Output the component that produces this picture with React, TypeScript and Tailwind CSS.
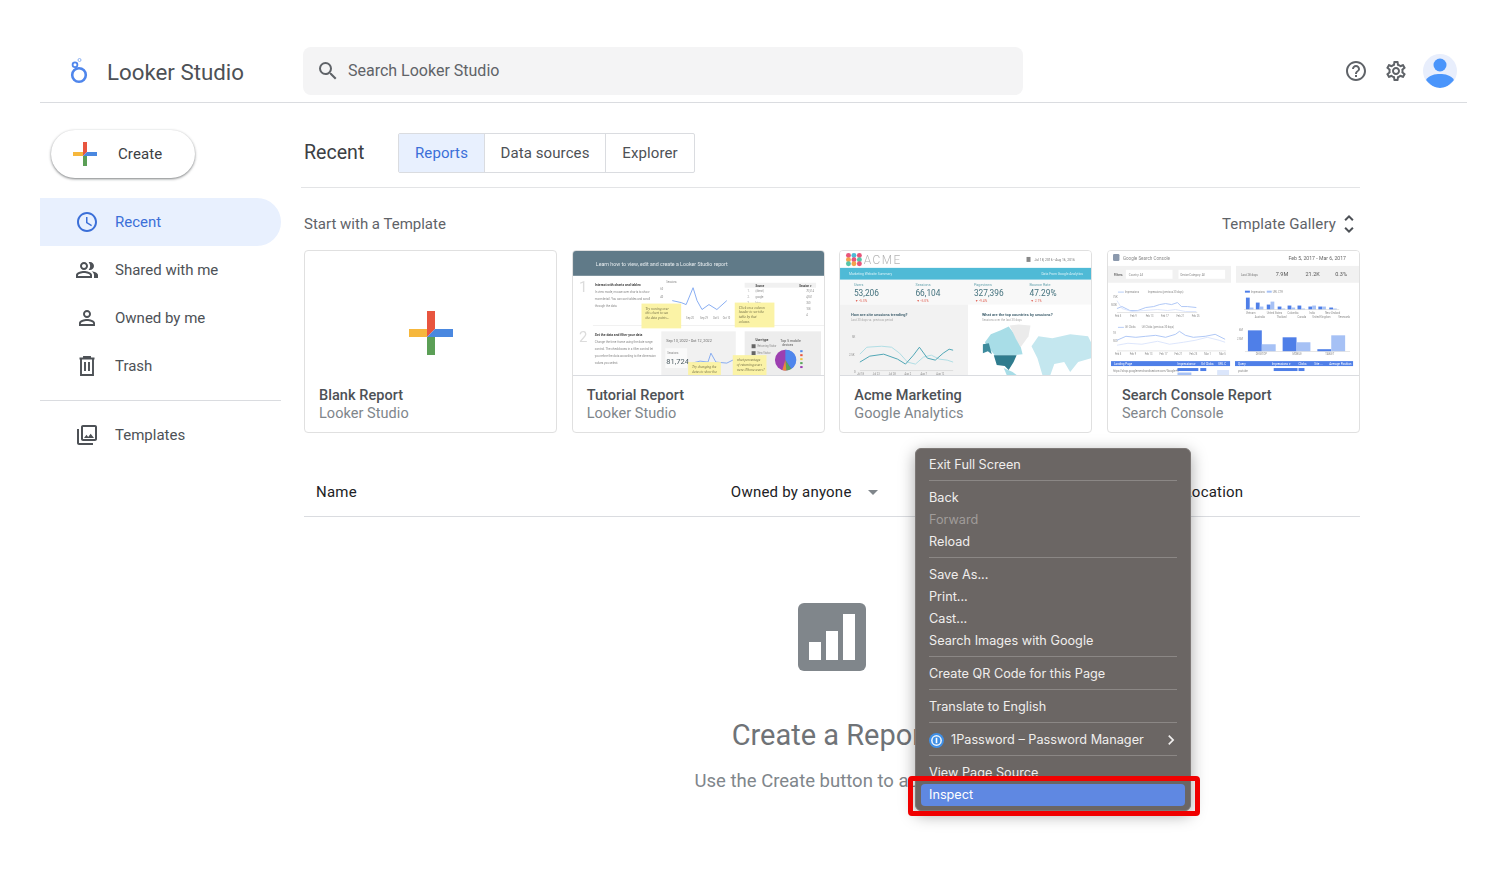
import {
  MdAccessTime,
  MdArrowDropDown,
  MdChevronRight,
  MdHelpOutline,
  MdOutlinePeopleAlt,
  MdOutlinePhotoLibrary,
  MdOutlineSettings,
  MdPersonOutline,
  MdSearch,
  MdUnfoldMore,
} from "react-icons/md";

function TrashIcon({ className }: { className?: string }) {
  return (
    <svg viewBox="0 0 24 24" width="24" height="24" className={className} fill="none" stroke="currentColor" strokeWidth="1.9">
      <path d="M4.5 4.5h15M9 4.5V3h6v1.5M6 4.5V21h12V4.5M10 8v9M14 8v9" />
    </svg>
  );
}

const navItems = [
  { label: "Recent", icon: MdAccessTime, active: true },
  { label: "Shared with me", icon: MdOutlinePeopleAlt },
  { label: "Owned by me", icon: MdPersonOutline },
  { label: "Trash", icon: TrashIcon },
];

const menuGroups = [
  [{ label: "Exit Full Screen" }],
  [{ label: "Back" }, { label: "Forward", disabled: true }, { label: "Reload" }],
  [{ label: "Save As..." }, { label: "Print..." }, { label: "Cast..." }, { label: "Search Images with Google" }],
  [{ label: "Create QR Code for this Page" }],
  [{ label: "Translate to English" }],
];

function Plus({ size, bar }: { size: number; bar: number }) {
  const a = (size - bar) / 2;
  const b = a + bar;
  return (
    <svg width={size} height={size} viewBox={`0 0 ${size} ${size}`}>
      <rect x={0} y={a} width={a} height={bar} fill="#f6b73c" />
      <rect x={a} y={b} width={bar} height={a} fill="#5b9f56" />
      <polygon points={`${a},0 ${b},0 ${b},${a} ${a},${b}`} fill="#e8553f" />
      <polygon points={`${b},${a} ${size},${a} ${size},${b} ${a},${b}`} fill="#4a88e0" />
    </svg>
  );
}

function LookerLogo() {
  return (
    <svg width="20" height="28" viewBox="0 0 20 28">
      <circle cx="10" cy="18" r="6.8" fill="none" stroke="#4f86ec" strokeWidth="2.6" />
      <circle cx="6" cy="7.8" r="2.4" fill="none" stroke="#4f86ec" strokeWidth="1.8" />
      <circle cx="10.5" cy="3" r="1.5" fill="none" stroke="#8ab0f3" strokeWidth="1" />
      <path d="M6.5 10.5 L8 12" stroke="#4f86ec" strokeWidth="1.6" />
    </svg>
  );
}

function Avatar() {
  return (
    <svg width="34" height="34" viewBox="0 0 34 34">
      <defs>
        <clipPath id="avatar-clip">
          <circle cx="17" cy="17" r="17" />
        </clipPath>
      </defs>
      <circle cx="17" cy="17" r="17" fill="#e8eefc" />
      <circle cx="17" cy="11" r="6.5" fill="#4a95fb" />
      <path d="M3 26 C6 21 12 20 17 20 C22 20 28 21 31 26 C27 31 22 34 17 34 C12 34 7 31 3 26Z" fill="#4a95fb" clipPath="url(#avatar-clip)" />
    </svg>
  );
}

function OnePasswordIcon() {
  return (
    <svg width="15" height="15" viewBox="0 0 15 15" className="mr-[7px]">
      <circle cx="7.5" cy="7.5" r="7.5" fill="#3f8fe6" />
      <circle cx="7.5" cy="7.5" r="5.4" fill="#eef5fc" />
      <circle cx="7.5" cy="7.5" r="3.9" fill="#3f8fe6" />
      <rect x="6.7" y="4.8" width="1.6" height="5.4" fill="#fff" />
    </svg>
  );
}

// tiny grey copy used inside the thumbnails
function T({ x, y, s, c = "#8a8a8a", w, children }: { x: number; y: number; s: number; c?: string; w?: number; children: string }) {
  return (
    <text x={x} y={y} fontSize={s} fill={c} fontWeight={w} fontFamily="Roboto, sans-serif">
      {children}
    </text>
  );
}

function Note({ x, y, w, h, lines }: { x: number; y: number; w: number; h: number; lines: string[] }) {
  return (
    <g>
      <rect x={x} y={y} width={w} height={h} fill="#fbf3a6" />
      {lines.map((l, i) => (
        <text key={l} x={x + 4} y={y + 6 + i * 5} fontSize="3.6" fill="#77734a" fontStyle="italic" fontFamily="'Liberation Serif', serif">
          {l}
        </text>
      ))}
    </g>
  );
}

function TutorialThumb() {
  return (
    <svg viewBox="0 0 253 125" className="h-full w-full blur-[0.3px]">
      <rect width="253" height="125" fill="#fff" />
      <rect width="253" height="25" fill="#607a88" />
      <T x={23} y={15} s={5.3} c="#e6ecef">Learn how to view, edit and create a Looker Studio report</T>
      <T x={6} y={41} s={15} c="#dcdcdc">1</T>
      <T x={6} y={92} s={15} c="#dcdcdc">2</T>
      <T x={22} y={35} s={3.4} c="#444" w={700}>Interact with charts and tables</T>
      <T x={22} y={42} s={3}>In view mode, mouse over charts to show</T>
      <T x={22} y={49} s={3}>more detail. You can sort tables and scroll</T>
      <T x={22} y={56} s={3}>through the data.</T>
      <rect x="20" y="75" width="233" height="0.6" fill="#e8e8e8" />
      <T x={94} y={32} s={2.6}>Sessions</T>
      <T x={88} y={39} s={2.6}>60</T>
      <T x={88} y={47} s={2.6}>40</T>
      <polyline
        points="100,50 109,52 114,54 121,37 125,50 130,59 137,54 145,59 155,50"
        fill="none"
        stroke="#7ba4f0"
        strokeWidth="0.9"
      />
      <T x={114} y={69} s={2.6}>Sep 20</T>
      <T x={128} y={69} s={2.6}>Sep 29</T>
      <T x={141} y={69} s={2.6}>Oct 5</T>
      <T x={151} y={69} s={2.6}>Oct 10</T>
      <rect x="173" y="32" width="72" height="5" fill="#f1f1f1" />
      <T x={184} y={35.8} s={2.8} c="#444" w={700}>Source</T>
      <T x={228} y={35.8} s={2.8} c="#444" w={700}>Session ▾</T>
      {["(direct)", "google", "bing", "yahoo", "ask"].map((s, i) => (
        <g key={s}>
          <T x={176} y={41.5 + i * 6} s={2.6}>{`${i + 1}.`}</T>
          <T x={184} y={41.5 + i * 6} s={2.6}>{s}</T>
          <T x={235} y={41.5 + i * 6} s={2.6}>{["70,514", "4,551", "350", "108", "4"][i]}</T>
        </g>
      ))}
      <Note x={69} y={53} w={40} h={25} lines={["Try moving over", "this chart to see", "the data points..."]} />
      <Note x={163} y={52} w={40} h={25} lines={["Click on a column", "header to sort the", "table by that", "column."]} />
      <T x={22} y={86} s={3.4} c="#444" w={700}>Set the data and filter your data</T>
      <T x={22} y={93} s={3}>Change the time frame using the date range</T>
      <T x={22} y={100} s={3}>control. The checkboxes in a filter control let</T>
      <T x={22} y={107} s={3}>you refine the data according to the dimension</T>
      <T x={22} y={114} s={3}>values you select.</T>
      <rect x="89" y="81" width="75" height="44" fill="#f1f1f1" />
      <T x={94} y={92} s={3.8} c="#666">Sep 13, 2022 - Oct 12, 2022</T>
      <rect x="93" y="98" width="22" height="20" fill="#fafafa" />
      <T x={95} y={104} s={2.8}>Sessions</T>
      <T x={94} y={114} s={7.6} c="#4a5a60">81,724</T>
      <polyline points="120,113 128,111 136,112 139,103 144,112 155,113 163,109" fill="none" stroke="#7ba4f0" strokeWidth="0.9" />
      <rect x="173" y="81" width="77" height="44" fill="#ededed" />
      <T x={184} y={91} s={3} c="#444" w={700}>User type</T>
      <rect x="180" y="94" width="4" height="4" fill="#666" />
      <T x={186} y={97} s={2.6}>Returning Visitor</T>
      <rect x="180" y="101" width="4" height="4" fill="#666" />
      <T x={186} y={104} s={2.6}>New Visitor</T>
      <T x={209} y={92} s={3.6} c="#555">Top 5 mobile</T>
      <T x={211} y={96} s={3.2} c="#555">devices</T>
      <circle cx="214" cy="110" r="10.5" fill="#9c3fb0" />
      <path d="M214 110 L214 99.5 A10.5 10.5 0 0 1 220 119 Z" fill="#4f86ec" />
      <path d="M214 110 L220 119 A10.5 10.5 0 0 1 215 120.5 Z" fill="#57a55a" />
      <path d="M214 110 L215 120.5 A10.5 10.5 0 0 1 211 120 Z" fill="#e98a3c" />
      {["#4f86ec", "#e8553f", "#f4c244", "#57a55a", "#9c3fb0"].map((c, i) => (
        <rect key={c} x="229" y={100 + i * 4} width="2.4" height="2" fill={c} />
      ))}
      <Note x={116} y={112} w={33} h={16} lines={["Try changing the", "dates to show the"]} />
      <Note x={161} y={105} w={34} h={21} lines={["what percentage", "of returning users", "were iPhone users?"]} />
    </svg>
  );
}

function AcmeThumb() {
  const kpis = [
    { x: 14, l: "Users", v: "53,206", d: "-5.3%" },
    { x: 76, l: "Sessions", v: "66,104", d: "-5.0%" },
    { x: 135, l: "Pageviews", v: "327,396", d: "-9.4%" },
    { x: 191, l: "Bounce Rate", v: "47.29%", d: "2.1%" },
  ];
  const hexColors = ["#e9557a", "#4fbad6", "#e9557a", "#f4a24c", "#e9557a", "#57c4a8", "#57c4a8", "#f4a24c", "#e9557a"];
  return (
    <svg viewBox="0 0 253 125" className="h-full w-full blur-[0.3px]">
      <rect width="253" height="125" fill="#fff" />
      {hexColors.map((c, i) => (
        <circle key={i} cx={8.5 + (i % 3) * 5.5} cy={4.5 + Math.floor(i / 3) * 4.2} r="2.5" fill={c} />
      ))}
      <text x="24" y="13" fontSize="12" letterSpacing="1.4" fill="#b4b4b4" fontWeight="300" fontFamily="Roboto, sans-serif">ACME</text>
      <rect x="188" y="6" width="4" height="5" fill="#888" />
      <T x={196} y={10} s={3.4} c="#777">Jul 18, 2016 - Aug 16, 2016</T>
      <rect y="17" width="253" height="12" fill="#4fbad6" />
      <T x={9} y={24.5} s={3.4} c="#d9f2f8">Marketing Website Summary</T>
      <T x={203} y={24.5} s={3.4} c="#d9f2f8">Data From Google Analytics</T>
      <rect y="29" width="253" height="25" fill="#f8f8f8" />
      {kpis.map((k) => (
        <g key={k.l}>
          <T x={k.x} y={35.5} s={3.8} c="#6aa5b0">{k.l}</T>
          <T x={k.x} y={45} s={8.4} c="#44727e">{k.v}</T>
          <T x={k.x + 1} y={51} s={3.4} c="#e2685c">{`▼ ${k.d}`}</T>
        </g>
      ))}
      <rect y="54" width="129" height="71" fill="#f2f2f2" />
      <T x={11} y={66} s={4} w={700} c="#4d6b78">How are site sessions trending?</T>
      <T x={11} y={70.5} s={3} c="#aaa">Last 30 days vs. previous period</T>
      <T x={143} y={66} s={4} w={700} c="#4d6b78">What are the top countries by sessions?</T>
      <T x={143} y={70.5} s={3} c="#aaa">Sessions over the last 30 days</T>
      <T x={12} y={88} s={2.8}>5K</T>
      <T x={9} y={106} s={2.8}>2.5K</T>
      <T x={14} y={123} s={2.8}>0</T>
      <path d="M20 120.5 H114" fill="none" stroke="#ccc" strokeWidth="0.5" />
      <polyline points="20,104 27,97 42,96 52,97 60,103 68,112 76,114 84,107 92,105 100,109 108,110 114,112" fill="none" stroke="#a9dbe3" strokeWidth="0.9" />
      <polyline points="20,112 30,106 44,104 58,109 66,114 74,105 80,97 88,108 96,110 104,103 110,99 114,100" fill="none" stroke="#3d9dae" strokeWidth="0.9" />
      {["Jul 18", "Jul 23", "Jul 28", "Aug 2", "Aug 7", "Aug 12"].map((d, i) => (
        <T key={d} x={17 + i * 16} y={125} s={2.6}>{d}</T>
      ))}
      <path d="M146 92 L152 84 L162 80 L170 76 L176 84 L182 96 L184 104 L176 105 L156 105 L150 98Z" fill="#a8dde7" />
      <path d="M171 75 L180 74 L192 75 L190 86 L182 97 L177 88Z" fill="#ebebeb" />
      <path d="M193 96 L200 86 L214 88 L232 84 L250 86 L253 92 L253 108 L240 112 L232 122 L226 112 L216 114 L212 125 L204 125 L199 108Z" fill="#c4e7ef" />
      <path d="M144 94 L150 93 L153 104 L149 101 L144 103Z" fill="#3d8b9d" />
      <path d="M155 105 L178 105 L175 112 L170 120 L166 116 L158 115Z" fill="#2f7c8e" />
      <path d="M165 118 L174 122 L178 125 L168 125Z" fill="#a8dde7" />
    </svg>
  );
}

function ConsoleThumb() {
  const blue = "#4f7fe8";
  const light = "#a6c1f5";
  const topBars: [number, number, number][] = [
    [139, 12, 2], [149, 7, 3], [160, 5, 8], [171, 3, 1], [181, 4, 2], [191, 4, 1], [202, 3, 4], [212, 3, 3], [223, 2, 1],
  ];
  return (
    <svg viewBox="0 0 253 125" className="h-full w-full blur-[0.3px]">
      <rect width="253" height="125" fill="#fff" />
      <rect x="5" y="3" width="6.5" height="7" rx="1.2" fill="#8b99ad" />
      <T x={15} y={9.5} s={4.6}>Google Search Console</T>
      <T x={182} y={9.5} s={5.2} c="#666">Feb 5, 2017 - Mar 6, 2017</T>
      <rect y="15" width="124" height="17" fill="#f1f1f1" />
      <rect x="18" y="19" width="47" height="9" fill="#fff" />
      <rect x="71" y="19" width="47" height="9" fill="#fff" />
      <T x={6} y={25} s={3} w={700} c="#666">Filters</T>
      <T x={21} y={24.8} s={2.8}>Country: All</T>
      <T x={73} y={24.8} s={2.8}>Device Category: All</T>
      <rect x="129" y="15" width="124" height="17" fill="#f1f1f1" />
      <T x={134} y={25} s={3} c="#777">Last 28 days</T>
      <T x={169} y={25.5} s={5.6} c="#555">7.9M</T>
      <T x={199} y={25.5} s={5.6} c="#555">21.2K</T>
      <T x={229} y={25.5} s={5.6} c="#555">0.3%</T>
      <rect x="10" y="41" width="6" height="0.8" fill={light} />
      <T x={17} y={42} s={2.6}>Impressions</T>
      <T x={40} y={42} s={2.6}>Impressions (previous 30 days)</T>
      <T x={5} y={47} s={2.6}>75K</T>
      <T x={3} y={55} s={2.6}>500K</T>
      <polyline points="9,58 14,56 22,60 30,60 38,57 46,56 52,54 58,53 64,54 70,52 74,56 80,56 89,57" fill="none" stroke={light} strokeWidth="0.9" />
      <polyline points="9,50 14,58 24,61 36,60 50,59 60,60 68,59 78,61 89,61" fill="none" stroke="#d4e0fb" strokeWidth="0.8" />
      <rect x="9" y="62" width="81" height="0.5" fill="#ccc" />
      {["Feb 5", "Feb 9", "Feb 13", "Feb 17", "Feb 21", "Feb 25"].map((d, i) => (
        <T key={d} x={7 + i * 15.5} y={67} s={2.6}>{d}</T>
      ))}
      <rect x="10" y="76.5" width="6" height="0.8" fill={light} />
      <T x={17} y={78} s={2.6}>Url Clicks</T>
      <T x={34} y={78} s={2.6}>Url Clicks (previous 30 days)</T>
      <T x={5} y={84} s={2.6}>1K</T>
      <T x={5} y={92} s={2.6}>500</T>
      <polyline points="9,90 18,86 28,87 38,86 48,85 58,87 68,84 72,81 78,85 86,87 98,86 108,84 118,89" fill="none" stroke={light} strokeWidth="0.9" />
      <polyline points="9,95 20,93 34,94 50,91 62,94 76,92 88,90 100,87 112,90 118,92" fill="none" stroke="#d4e0fb" strokeWidth="0.8" />
      <rect x="9" y="100.5" width="110" height="0.5" fill="#ccc" />
      {["Feb 5", "Feb 9", "Feb 13", "Feb 17", "Feb 21", "Feb 25", "Mar 1", "Mar 5"].map((d, i) => (
        <T key={d} x={7 + i * 15} y={105} s={2.6}>{d}</T>
      ))}
      <rect x="138" y="40" width="5" height="2" fill={blue} />
      <T x={144} y={42} s={2.6}>Impressions</T>
      <rect x="160" y="40" width="5" height="2" fill={light} />
      <T x={166} y={42} s={2.6}>URL CTR</T>
      {topBars.map(([x, h, l]) => (
        <g key={x}>
          <rect x={x} y={59 - h} width="3.8" height={h} fill={blue} />
          <rect x={x + 3.8} y={59 - l} width="3.8" height={l} fill={light} />
        </g>
      ))}
      <rect x="137" y="59" width="96" height="0.5" fill="#ccc" />
      <T x={139} y={64} s={2.6}>Vietnam</T>
      <T x={160} y={64} s={2.6}>United States</T>
      <T x={181} y={64} s={2.6}>Colombia</T>
      <T x={203} y={64} s={2.6}>India</T>
      <T x={219} y={64} s={2.6}>New Zealand</T>
      <T x={148} y={68} s={2.6}>Australia</T>
      <T x={170} y={68} s={2.6}>Thailand</T>
      <T x={191} y={68} s={2.6}>Canada</T>
      <T x={206} y={68} s={2.6}>United Kingdom</T>
      <T x={232} y={68} s={2.6}>Venezuela</T>
      <T x={132} y={81} s={2.6}>6M</T>
      <T x={130} y={90} s={2.6}>2.5M</T>
      <rect x="138" y="101" width="106" height="0.5" fill="#ccc" />
      <rect x="141" y="80" width="14" height="21" fill={blue} />
      <rect x="155" y="94" width="14" height="7" fill={light} />
      <rect x="176" y="87" width="14" height="14" fill={blue} />
      <rect x="190" y="92" width="14" height="9" fill={light} />
      <rect x="211" y="99" width="14" height="2" fill={blue} />
      <rect x="225" y="85" width="14" height="16" fill={light} />
      <T x={149} y={105} s={2.6}>DESKTOP</T>
      <T x={186} y={105} s={2.6}>MOBILE</T>
      <T x={219} y={105} s={2.6}>TABLET</T>
      <rect x="3" y="111" width="120" height="5" fill={blue} />
      <rect x="128" y="111" width="119" height="5" fill={blue} />
      <T x={6} y={115} s={3} c="#fff">Landing Page</T>
      <T x={70} y={115} s={3} c="#fff">Impressions ▾</T>
      <T x={94} y={115} s={3} c="#fff">Url Clicks</T>
      <T x={111} y={115} s={3} c="#fff">URL C</T>
      <T x={131} y={115} s={3} c="#fff">Query</T>
      <T x={165} y={115} s={3} c="#fff">Impressions ▾</T>
      <T x={192} y={115} s={3} c="#fff">Clicks</T>
      <T x={208} y={115} s={3} c="#fff">Site ...</T>
      <T x={223} y={115} s={3} c="#fff">Average Position</T>
      <T x={5} y={121.5} s={2.8}>https://shop.googlemerchandisestore.com/Google+R</T>
      <T x={131} y={121.5} s={2.8}>youtube</T>
      <rect x="70" y="118" width="21" height="3" fill={blue} />
      <rect x="93" y="118" width="6" height="3" fill={blue} />
      <rect x="167" y="118" width="24" height="3" fill={blue} />
      <rect x="192" y="118" width="6" height="3" fill={blue} />
      <rect x="70" y="122.5" width="14" height="2.5" fill={light} />
      <rect x="110" y="120" width="12" height="5" fill="#dbe6fb" />
    </svg>
  );
}

const templates = [
  { title: "Tutorial Report", sub: "Looker Studio", thumb: <TutorialThumb /> },
  { title: "Acme Marketing", sub: "Google Analytics", thumb: <AcmeThumb /> },
  { title: "Search Console Report", sub: "Search Console", thumb: <ConsoleThumb /> },
];

function CardText({ title, sub }: { title: string; sub: string }) {
  return (
    <div className="pl-[14px] pt-[11px] text-[14.5px] leading-[18px] tracking-[0.05px]">
      <p className="font-medium text-[#4d5156]">{title}</p>
      <p className="text-[#80868b]">{sub}</p>
    </div>
  );
}

function ContextMenu() {
  return (
    <div className="absolute left-[915px] top-[448px] w-[276px] h-[363px] rounded-[6px] bg-[#6b6664] border border-[#7d7876] shadow-[0_4px_16px_rgba(0,0,0,0.35)] px-[5px] pt-[5px] text-[12.7px] text-[#f0eeed] font-['Inter',sans-serif] overflow-hidden">
      {menuGroups.map((group, i) => (
        <div key={i}>
          {group.map((item) => (
            <div key={item.label} className={`h-[22px] px-[8px] flex items-center leading-none ${item.disabled ? "text-[#a09c9a]" : ""}`}>
              {item.label}
            </div>
          ))}
          <div className="mx-[8px] mt-[4px] mb-[6px] h-px bg-[#8b8785]" />
        </div>
      ))}
      <div className="h-[22px] px-[8px] flex items-center">
        <OnePasswordIcon />
        1Password – Password Manager
        <MdChevronRight className="ml-auto -mr-[4px] text-[20px] text-[#f0eeed]" />
      </div>
      <div className="mx-[8px] mt-[4px] mb-[6px] h-px bg-[#8b8785]" />
      <div className="h-[22px] px-[8px] flex items-center">View Page Source</div>
      <div className="h-[22px] px-[8px] flex items-center rounded-[4px] bg-[#5f88e2] text-white">Inspect</div>
    </div>
  );
}

export default function App() {
  return (
    <div className="relative h-[894px] overflow-hidden bg-white text-[#3c4043] font-['Roboto',sans-serif]">
      <header className="mx-10 flex items-center border-b border-[#dadce0] pt-[47px] pb-[7px]">
        <div className="ml-[29px] w-[234px] flex items-center">
          <LookerLogo />
          <span className="ml-[18px] pt-[3px] text-[22.3px] text-[#4d5156]">Looker Studio</span>
        </div>
        <div className="h-12 w-[720px] rounded-lg bg-[#f4f4f5] flex items-center pl-[13px] text-[#5f6368]">
          <MdSearch className="text-[24px]" />
          <span className="ml-[8px] text-[16px]">Search Looker Studio</span>
        </div>
        <div className="ml-auto pr-[10px] flex items-center text-[#5f6368]">
          <MdHelpOutline className="text-[24px]" />
          <MdOutlineSettings className="ml-[16px] text-[24px]" />
          <div className="ml-[15px]"><Avatar /></div>
        </div>
      </header>

      <div className="mx-10 flex">
        <aside className="w-[241px] shrink-0">
          <button className="mt-[27px] ml-[11px] w-[144px] h-12 rounded-full bg-white shadow-[0_1px_3px_rgba(60,64,67,0.45),0_1px_2px_rgba(60,64,67,0.3)] flex items-center pl-[22px] text-[15px] tracking-[0.1px]">
            <Plus size={24} bar={4} />
            <span className="ml-[21px]">Create</span>
          </button>
          <nav className="mt-[20px]">
            {navItems.map((item) => {
              const Icon = item.icon;
              return (
                <div
                  key={item.label}
                  className={`h-12 flex items-center rounded-r-[24px] pl-[35px] text-[15px] ${item.active ? "bg-[#e8f0fe] text-[#3b6fd8]" : "text-[#4d5156]"}`}
                >
                  <Icon className="text-[24px]" />
                  <span className="ml-[16px]">{item.label}</span>
                </div>
              );
            })}
          </nav>
          <div className="mt-[10px] h-px bg-[#dadce0]" />
          <div className="mt-[10px] h-12 flex items-center pl-[35px] text-[15px] text-[#4d5156]">
            <MdOutlinePhotoLibrary className="text-[24px]" />
            <span className="ml-[16px]">Templates</span>
          </div>
        </aside>

        <main className="ml-[23px] w-[1056px]">
          <div className="pt-[30px] flex items-center">
            <h1 className="w-[94px] text-[19.6px] text-[#3c4043]">Recent</h1>
            <div className="h-10 flex rounded-[2px] border border-[#dadce0] text-[15px] tracking-[0.1px] text-[#4d5156]">
              <div className="w-[86px] flex items-center justify-center bg-[#e8f0fe] text-[#3b6fd8] border-r border-[#dadce0]">Reports</div>
              <div className="w-[121px] flex items-center justify-center border-r border-[#dadce0]">Data sources</div>
              <div className="w-[88px] flex items-center justify-center">Explorer</div>
            </div>
          </div>
          <div className="mt-[14px] -ml-[3px] h-px bg-[#e3e4e6]" />
          <div className="mt-[23px] h-[26px] flex items-center justify-between text-[15px] text-[#5f6368]">
            <span>Start with a Template</span>
            <span className="flex items-center tracking-[0.12px]">
              Template Gallery
              <MdUnfoldMore className="ml-[1px] -mr-[1px] text-[24px] text-[#4d5156]" />
            </span>
          </div>
          <div className="mt-[13px] grid grid-cols-4 gap-[14.6px]">
            <div className="h-[183px] rounded-[4px] border border-[#e0e0e0] overflow-hidden">
              <div className="h-[125px] pt-[60px] flex justify-center">
                <Plus size={44} bar={8} />
              </div>
              <CardText title="Blank Report" sub="Looker Studio" />
            </div>
            {templates.map((t) => (
              <div key={t.title} className="h-[183px] rounded-[4px] border border-[#e0e0e0] overflow-hidden">
                <div className="h-[125px] border-b border-[#dadce0]">{t.thumb}</div>
                <CardText title={t.title} sub={t.sub} />
              </div>
            ))}
          </div>
          <div className="mt-[35px] h-[49px] border-b border-[#dadce0] flex items-center text-[15px] tracking-[0.22px] text-[#202124]">
            <span className="ml-[12px]">Name</span>
            <span className="ml-[374px]">Owned by anyone</span>
            <MdArrowDropDown className="ml-[9px] text-[24px] text-[#80868b]" />
            <span className="ml-[299px]">Location</span>
          </div>
          <div className="mt-[86px] flex flex-col items-center">
            <svg width="68" height="68" viewBox="0 0 68 68">
              <rect width="68" height="68" rx="6" fill="#80868b" />
              <rect x="11" y="39" width="12" height="18" fill="#fff" />
              <rect x="28" y="28" width="12" height="29" fill="#fff" />
              <rect x="45" y="11" width="12" height="46" fill="#fff" />
            </svg>
            <h2 className="mt-[45px] text-[29px] leading-[38px] text-[#6f7377]">Create a Report</h2>
            <p className="mt-[15px] text-[18.5px] leading-[24px] text-[#80868b]">Use the Create button to add one.</p>
          </div>
        </main>
      </div>

      <ContextMenu />
      <div className="absolute left-[908px] top-[776px] w-[292px] h-[40px] rounded-[4px] border-[5px] border-[#f00000]" />
    </div>
  );
}
